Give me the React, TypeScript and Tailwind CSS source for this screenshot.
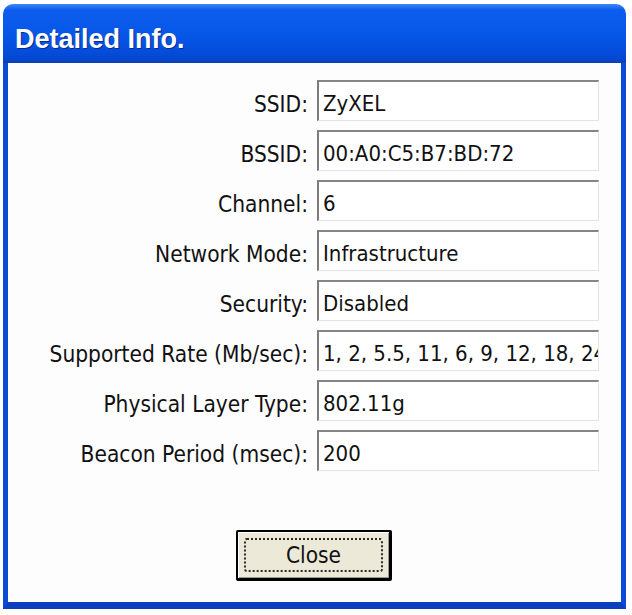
const rows: { label: string; value: string }[] = [
  { label: 'SSID:', value: 'ZyXEL' },
  { label: 'BSSID:', value: '00:A0:C5:B7:BD:72' },
  { label: 'Channel:', value: '6' },
  { label: 'Network Mode:', value: 'Infrastructure' },
  { label: 'Security:', value: 'Disabled' },
  { label: 'Supported Rate (Mb/sec):', value: '1, 2, 5.5, 11, 6, 9, 12, 18, 24, 36, 48, 54' },
  { label: 'Physical Layer Type:', value: '802.11g' },
  { label: 'Beacon Period (msec):', value: '200' },
]

export default function App() {
  return (
    <div className="w-[632px] h-[615px] bg-white pt-[4px] pl-[3px] font-['DejaVu_Sans_Condensed','DejaVu_Sans',sans-serif] text-[#111]">
      <div className="flex h-[605px] w-[623px] flex-col">
        {/* Title bar */}
        <div className="h-[59px] shrink-0 rounded-t-[10px] bg-[linear-gradient(to_bottom,#3d86f9_0%,#0c5ced_10%,#0656e8_55%,#0449d6_90%,#0a3fb6_100%)] pl-[12px] pt-[20px]">
          <h1 className="font-['Liberation_Sans',Arial,sans-serif] text-[27px] font-bold leading-[30px] text-white [text-shadow:1px_1px_0_#0a2a8a]">
            Detailed Info.
          </h1>
        </div>

        {/* Client area */}
        <div className="flex flex-1 flex-col border-b-[7px] border-l-[5px] border-r-[5px] border-[#0b4ad6] border-b-[#0c3fbd] bg-[#fdfdfe] pt-[17px]">
          <div className="flex flex-col gap-[9px]">
            {rows.map((r) => (
              <div key={r.label} className="flex h-[41px] items-stretch">
                <div className="flex w-[300px] shrink-0 items-center justify-end pt-[6px] text-[22.5px] leading-[26px] whitespace-nowrap">
                  {r.label}
                </div>
                <div className="ml-[9px] flex w-[282px] items-center overflow-hidden border-l-2 border-t-2 border-b border-r border-l-[#7c7c7c] border-t-[#858585] border-b-[#e4e4e4] border-r-[#e4e4e4] bg-white pl-[4px] pt-[5px] text-[22px] leading-[26px] whitespace-nowrap">
                  {r.value}
                </div>
              </div>
            ))}
          </div>

          <div className="mt-[59px] flex justify-center pr-[1px]">
            <button className="h-[51px] w-[156px] rounded-[2px] border-2 border-black border-b-[3px] border-r-[3px] bg-[#ece9d8] p-[6px] shadow-[inset_1px_1px_0_#ffffff,inset_-1px_-1px_0_#9d9a8c]">
              <span className="flex h-full w-full items-center justify-center rounded-[3px] border-2 border-dotted border-[#2a2a2a] text-[22.5px] leading-[26px]">
                Close
              </span>
            </button>
          </div>
        </div>
      </div>
    </div>
  )
}
